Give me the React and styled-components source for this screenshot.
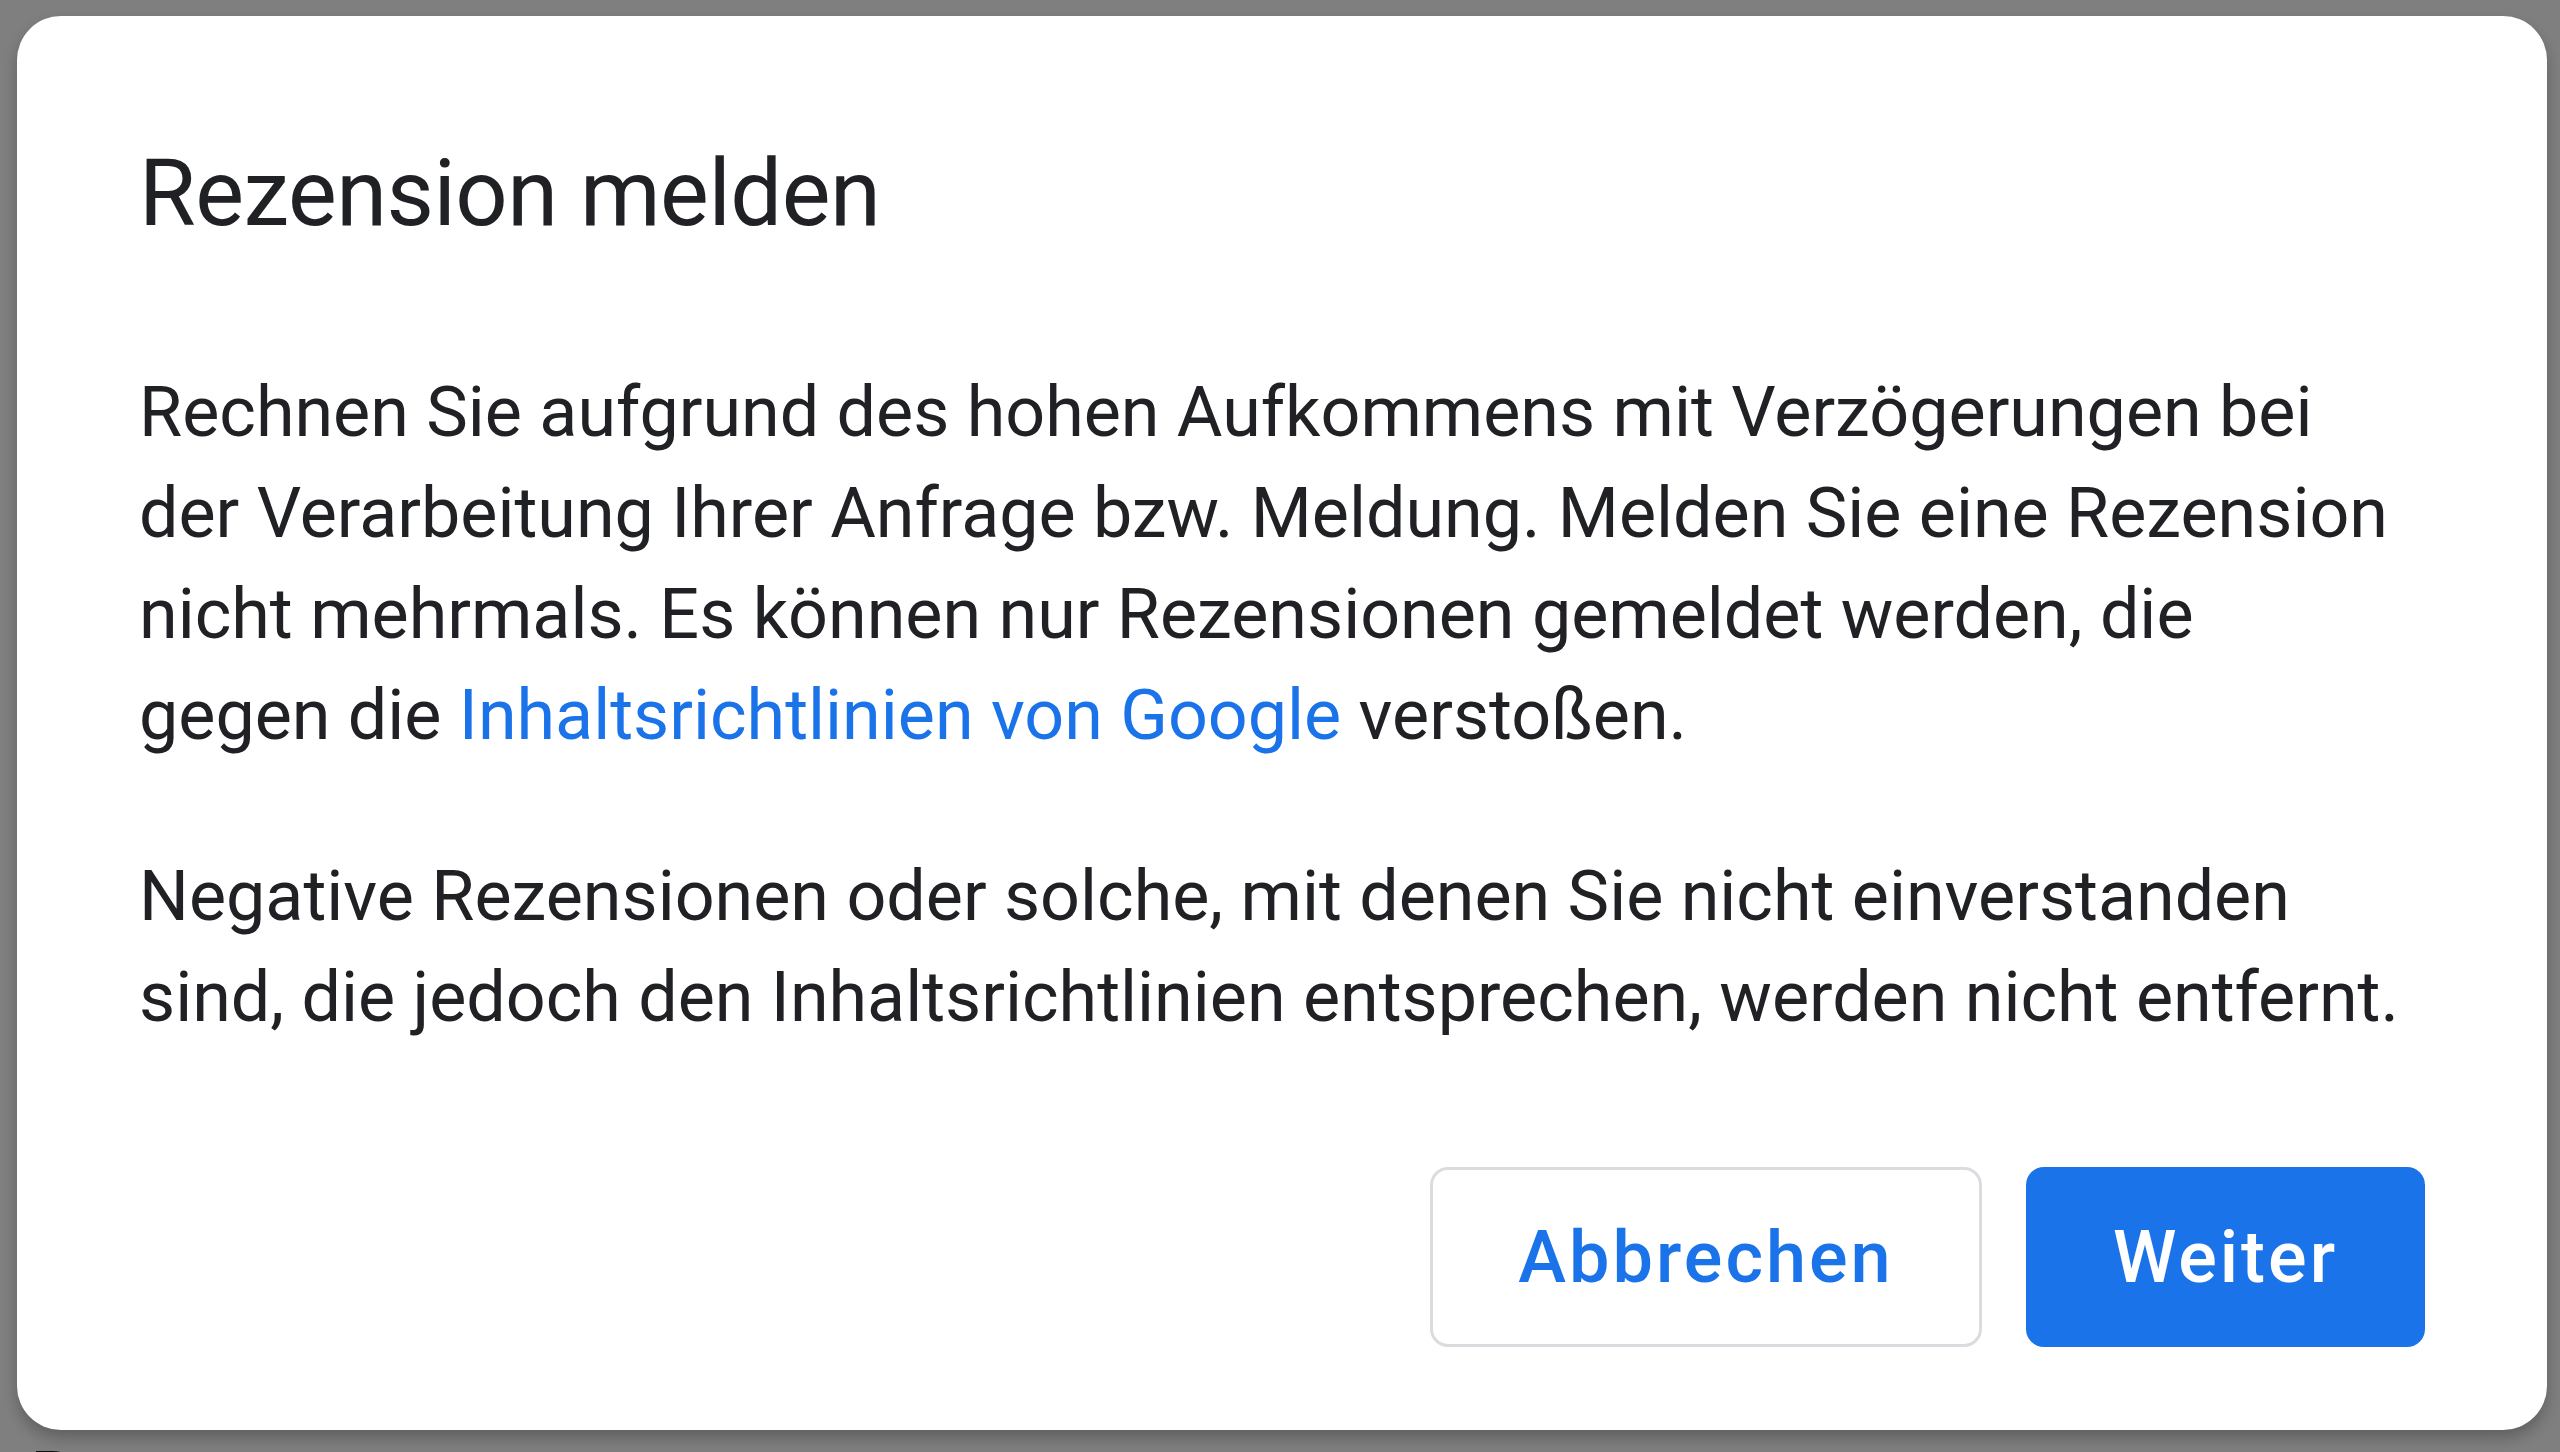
import React from 'react';
import styled, { createGlobalStyle } from 'styled-components';

const GlobalStyle = createGlobalStyle`
  html, body {
    margin: 0;
    padding: 0;
    background: #ffffff;
  }
  body {
    font-family: Roboto, "Liberation Sans", Arial, sans-serif;
    -webkit-font-smoothing: antialiased;
  }
`;

const Page = styled.div`
  width: 2560px;
  height: 1452px;
  overflow: hidden;
  background: #ffffff;
  display: flex;
  flex-direction: column;
  padding-top: 628px;
  box-sizing: border-box;
`;

const Divider = styled.div`
  height: 2px;
  background: #d6d6d6;
`;

const PageText = styled.div`
  margin-top: 808px;
  margin-left: 30px;
  font-size: 72px;
  color: #202124;
  white-space: nowrap;
`;

const Scrim = styled.div`
  position: fixed;
  inset: 0;
  background: rgba(0, 0, 0, 0.5);
  display: flex;
  align-items: flex-start;
  padding: 16px 13px 0 17px;
  box-sizing: border-box;
`;

const Dialog = styled.div`
  width: 100%;
  height: 1414px;
  box-sizing: border-box;
  background: #ffffff;
  border-radius: 44px;
  padding: 119px 122px 83px 122px;
  display: flex;
  flex-direction: column;
  box-shadow: 0 8px 16px rgba(0, 0, 0, 0.25);
`;

const Title = styled.h2`
  margin: 0;
  font-family: Roboto, "Liberation Sans", Arial, sans-serif;
  font-weight: 400;
  font-size: 92px;
  line-height: 117px;
  color: #202124;
  letter-spacing: -0.5px;
`;

const Paragraph = styled.p`
  margin: ${(p) => p.$top}px 0 0 0;
  font-size: 70px;
  line-height: 101px;
  color: #202124;
`;

const Link = styled.a`
  color: #1a73e8;
  text-decoration: none;
`;

const Actions = styled.div`
  margin-top: auto;
  display: flex;
  justify-content: flex-end;
  gap: 44px;
`;

const Button = styled.button`
  height: 180px;
  padding: 0 80px;
  border-radius: 18px;
  font-family: Roboto, "Liberation Sans", Arial, sans-serif;
  font-weight: 500;
  font-size: 72px;
  letter-spacing: 3px;
  cursor: pointer;
  box-sizing: border-box;
  border: ${(p) => (p.$primary ? 'none' : '3px solid #dadce0')};
  background: ${(p) => (p.$primary ? '#1a73e8' : '#ffffff')};
  color: ${(p) => (p.$primary ? '#ffffff' : '#1a73e8')};
  min-width: ${(p) => (p.$primary ? 399 : 552)}px;
`;

export default function App() {
  return (
    <>
      <GlobalStyle />
      <Page>
        <Divider />
        <PageText>Bewertungen</PageText>
      </Page>
      <Scrim>
        <Dialog role="dialog">
          <Title>Rezension melden</Title>
          <Paragraph $top={110}>
            Rechnen Sie aufgrund des hohen Aufkommens mit Verzögerungen bei der
            Verarbeitung Ihrer Anfrage bzw. Meldung. Melden Sie eine Rezension
            nicht mehrmals. Es können nur Rezensionen gemeldet werden, die
            <br />
            gegen die <Link href="#">Inhaltsrichtlinien von Google</Link> verstoßen.
          </Paragraph>
          <Paragraph $top={80}>
            Negative Rezensionen oder solche, mit denen Sie nicht einverstanden
            sind, die jedoch den Inhaltsrichtlinien entsprechen, werden nicht
            entfernt.
          </Paragraph>
          <Actions>
            <Button>Abbrechen</Button>
            <Button $primary>Weiter</Button>
          </Actions>
        </Dialog>
      </Scrim>
    </>
  );
}
